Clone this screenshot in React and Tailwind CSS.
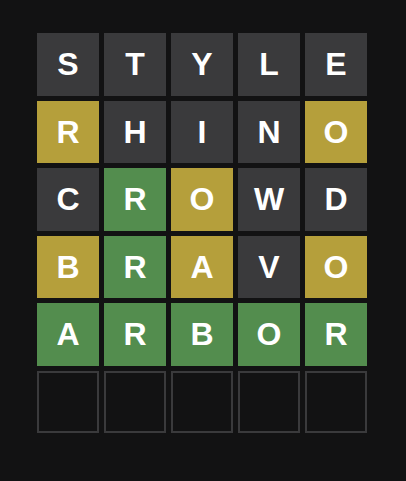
import React from 'react';

const rows = [
  [['S', 'x'], ['T', 'x'], ['Y', 'x'], ['L', 'x'], ['E', 'x']],
  [['R', 'y'], ['H', 'x'], ['I', 'x'], ['N', 'x'], ['O', 'y']],
  [['C', 'x'], ['R', 'g'], ['O', 'y'], ['W', 'x'], ['D', 'x']],
  [['B', 'y'], ['R', 'g'], ['A', 'y'], ['V', 'x'], ['O', 'y']],
  [['A', 'g'], ['R', 'g'], ['B', 'g'], ['O', 'g'], ['R', 'g']],
];

const tileColor = {
  x: 'bg-[#3a3a3c]',
  y: 'bg-[#b59f3b]',
  g: 'bg-[#538d4e]',
};

export default function App() {
  return (
    <div className="w-[406px] h-[481px] bg-[#121213] pt-[33px] pl-[37px]">
      <div className="grid grid-cols-5 grid-rows-6 gap-[5px] w-[330px] h-[400px]">
        {rows.flat().map(([letter, state], i) => (
          <div
            key={i}
            className={`${tileColor[state]} flex items-center justify-center text-white text-[32px] font-bold font-['Liberation_Sans',Arial,sans-serif] leading-none`}
          >
            {letter}
          </div>
        ))}
        {Array.from({ length: 5 }).map((_, i) => (
          <div key={'e' + i} className="border-2 border-[#3a3a3c]" />
        ))}
      </div>
    </div>
  );
}
